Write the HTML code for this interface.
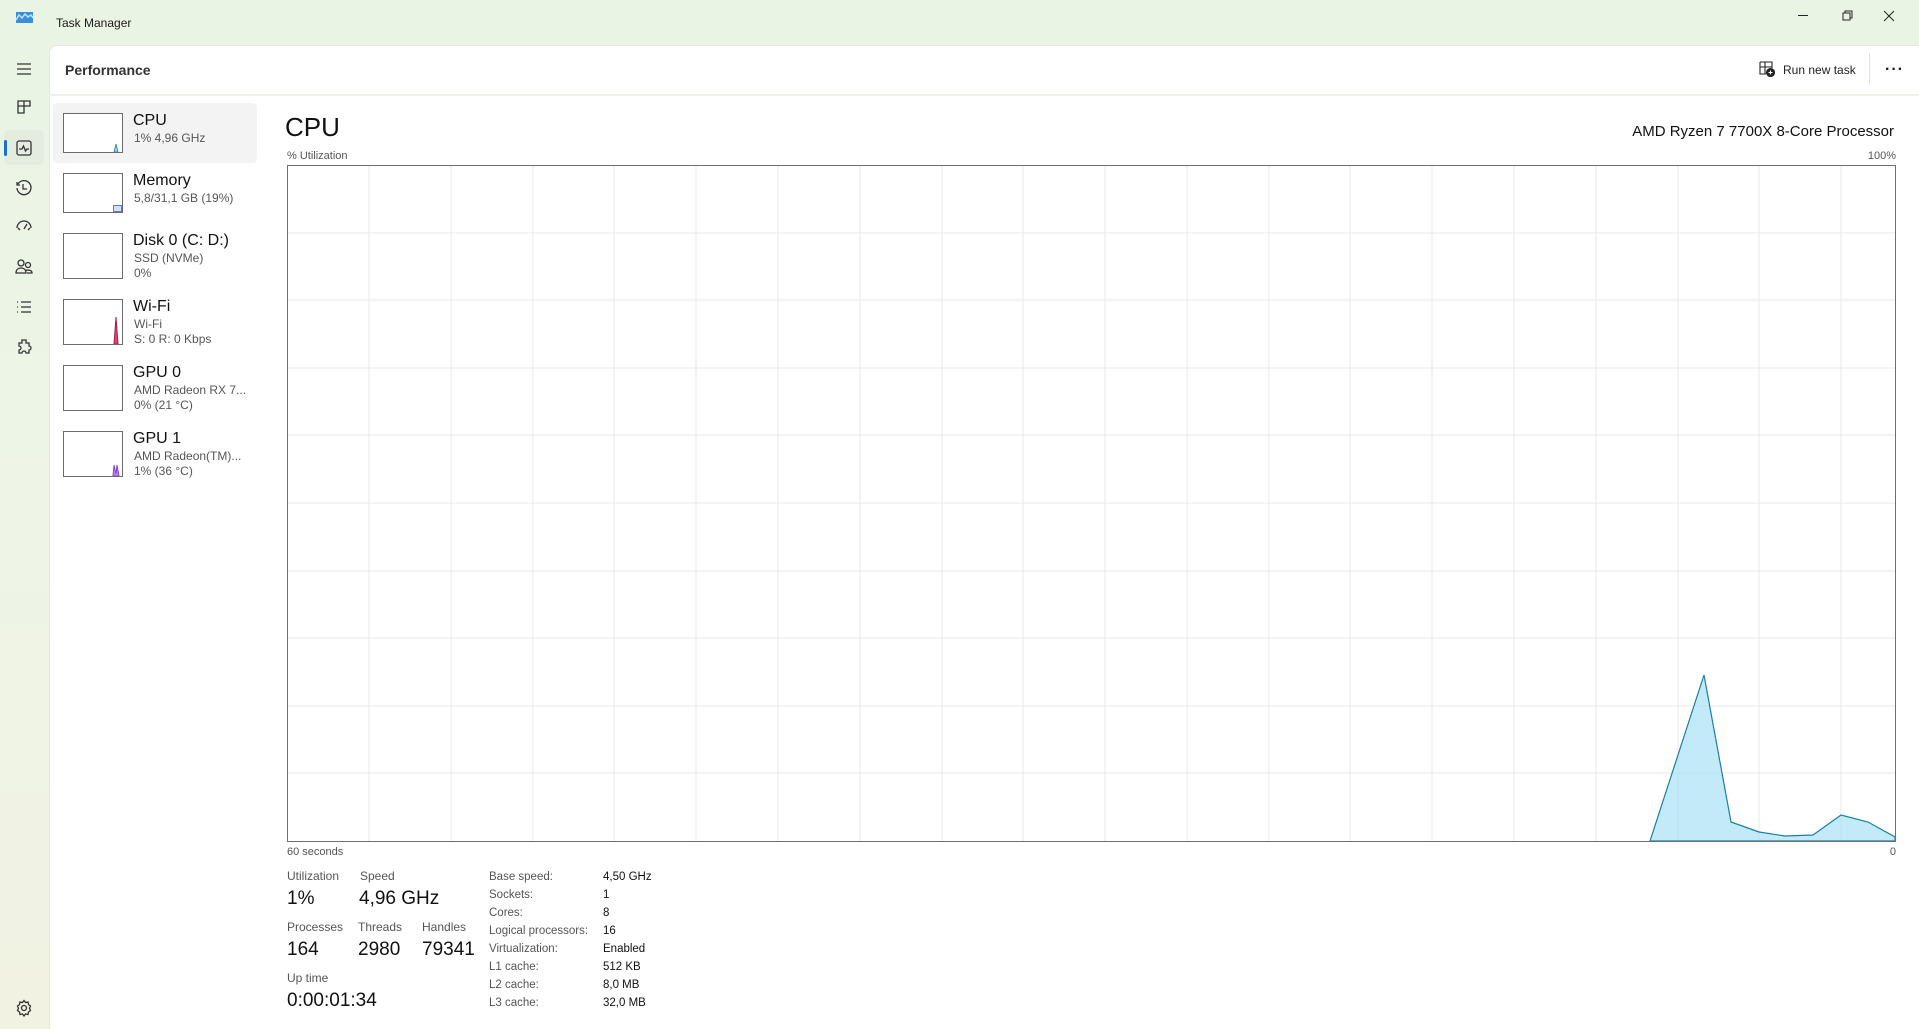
<!DOCTYPE html>
<html><head><meta charset="utf-8"><style>
*{margin:0;padding:0;box-sizing:border-box}
body{width:1919px;height:1029px;overflow:hidden;font-family:"Liberation Sans",sans-serif;color:#1a1a1a;background:linear-gradient(180deg,#e9f4e4 0%,#eef5e6 50%,#f1f2e2 100%);position:relative}
.a{position:absolute;white-space:nowrap}
#main{position:absolute;left:49px;top:45px;right:0;bottom:0;background:#fff;border-top-left-radius:8px;border-left:1px solid #e4e8e0;border-top:1px solid #e4e8e0}
.thumb{position:absolute;left:63px;width:60px;border:1px solid #6b6b6b;background:#fff}
.t1{font-size:16px;color:#111}
.t2{font-size:12px;color:#555}
.lbl{font-size:12px;color:#555}
.val{font-size:19px;color:#111}
.ic{position:absolute;left:14px;width:20px;height:20px}
</style></head><body>
<svg class="a" style="left:16px;top:12px" width="17" height="11"><rect width="17" height="11" fill="#3a8fd6"/><path d="M0 8 L3 3 L6 6 L9 2 L12 5 L15 3 L17 6" stroke="#bde3ff" fill="none" stroke-width="1.5"/></svg>
<div class="a" style="left:56px;top:16px;font-size:12px">Task Manager</div>
<svg class="a" style="left:1795px;top:8px" width="110" height="20" stroke="#222" fill="none" stroke-width="1"><path d="M3 7.5H13"/><path d="M48 5h7v7h-7z M50 5V3h7v7h-2"/><path d="M89 3L99 13M99 3L89 13"/></svg>
<div id="main"></div>
<svg class="ic" style="top:59px" viewBox="0 0 20 20" stroke="#333" fill="none" stroke-width="1.3"><path d="M3 5h14M3 10h14M3 15h14"/></svg>
<svg class="ic" style="top:97px" viewBox="0 0 20 20" stroke="#333" fill="none" stroke-width="1.3"><path d="M4 4h12v5H4zM4 9v7h6V4M10 9h6"/></svg>
<div class="a" style="left:4px;top:130px;width:40px;height:35px;background:#e4ecdf;border-radius:5px"></div>
<div class="a" style="left:4px;top:140px;width:3px;height:16px;background:#1a6fc8;border-radius:2px"></div>
<svg class="ic" style="top:138px" viewBox="0 0 20 20" stroke="#333" fill="none" stroke-width="1.3"><rect x="3" y="3" width="14" height="14" rx="2"/><path d="M5 11h3l1.5-3 2 5 1.5-2h2"/></svg>
<svg class="ic" style="top:178px" viewBox="0 0 20 20" stroke="#333" fill="none" stroke-width="1.3"><path d="M4 6A7 7 0 1 1 3 10M3 4v3h3M9 6v5h4"/></svg>
<svg class="ic" style="top:217px" viewBox="0 0 20 20" stroke="#333" fill="none" stroke-width="1.3"><path d="M3 11a7 7 0 0 1 14 0M10 12l3-5M6 13l-2-2M14 13l2-2"/></svg>
<svg class="ic" style="top:257px" viewBox="0 0 20 20" stroke="#333" fill="none" stroke-width="1.3"><circle cx="7" cy="6" r="3"/><circle cx="14" cy="8" r="2.5"/><path d="M2 16c0-4 3-5 5-5s5 1 5 5zM12 13c3 0 6 0 6 3h-5"/></svg>
<svg class="ic" style="top:297px" viewBox="0 0 20 20" stroke="#333" fill="none" stroke-width="1.3"><path d="M3 5h1M3 10h1M3 15h1M7 5h10M7 10h10M7 15h10"/></svg>
<svg class="ic" style="top:337px" viewBox="0 0 20 20" stroke="#333" fill="none" stroke-width="1.3"><path d="M8 3h4v3h3v3a2 2 0 0 1 0 4v3h-3a2 2 0 0 0-4 0H5v-3a2 2 0 0 0 0-4V6h3z"/></svg>
<svg class="ic" style="top:998px" viewBox="0 0 20 20" stroke="#333" fill="none" stroke-width="1.3"><circle cx="10" cy="10" r="2.5"/><path d="M10 2.5l1.5 2 2.5-.5.5 2.5 2 1.5-1 2.3 1 2.2-2 1.5-.5 2.5-2.5-.5-1.5 2-1.5-2-2.5.5-.5-2.5-2-1.5 1-2.2-1-2.3 2-1.5.5-2.5 2.5.5z"/></svg>
<div class="a" style="left:65px;top:62px;font-size:14px;font-weight:bold;color:#333">Performance</div>
<div class="a" style="left:49px;top:94px;right:0;height:2px;background:#eeeeea"></div>
<svg class="a" style="left:1759px;top:61px" width="16" height="16" stroke="#222" fill="none" stroke-width="1.1"><path d="M1 1h12v6M1 1v12h6M1 6h12M6 1v12"/><circle cx="11.5" cy="11.5" r="4" fill="#222"/><path d="M11.5 9.5v4M9.5 11.5h4" stroke="#fff"/></svg>
<div class="a" style="left:1783px;top:63px;font-size:12px;color:#222">Run new task</div>
<div class="a" style="left:1869px;top:53px;width:1px;height:32px;background:#e3e3e3"></div>
<div class="a" style="left:1885px;top:61px;font-size:16px;letter-spacing:1px;font-weight:bold">···</div>
<div class="a" style="left:53px;top:103px;width:204px;height:60px;background:#f3f3f3;border-radius:4px"></div>
<div class="thumb" style="top:113px;height:40px"><svg width="58" height="38" style="position:absolute;left:0;top:0"><path d="M50 38L52 30L54 38Z" fill="#9fd8ee" stroke="#1b7fa5" stroke-width=".8"/></svg></div>
<div class="a t1" style="left:133px;top:112px">CPU</div><div class="a t2" style="left:134px;top:131px">1% 4,96 GHz</div>
<div class="thumb" style="top:173px;height:40px"><div style="position:absolute;right:0;bottom:0;width:9px;height:7px;background:#cfe0f7;border:1px solid #5c7fbf"></div></div>
<div class="a t1" style="left:133px;top:172px">Memory</div><div class="a t2" style="left:134px;top:191px">5,8/31,1 GB (19%)</div>
<div class="thumb" style="top:233px;height:46px"></div>
<div class="a t1" style="left:133px;top:232px">Disk 0 (C: D:)</div><div class="a t2" style="left:134px;top:251px">SSD (NVMe)</div><div class="a t2" style="left:134px;top:266px">0%</div>
<div class="thumb" style="top:299px;height:46px"><svg width="58" height="44" style="position:absolute"><path d="M50 44L52 17L54 44Z" fill="#d9477a" stroke="#b01848"/></svg></div>
<div class="a t1" style="left:133px;top:298px">Wi-Fi</div><div class="a t2" style="left:134px;top:317px">Wi-Fi</div><div class="a t2" style="left:134px;top:332px">S: 0 R: 0 Kbps</div>
<div class="thumb" style="top:365px;height:46px"></div>
<div class="a t1" style="left:133px;top:364px">GPU 0</div><div class="a t2" style="left:134px;top:383px">AMD Radeon RX 7...</div><div class="a t2" style="left:134px;top:398px">0% (21 °C)</div>
<div class="thumb" style="top:431px;height:46px"><svg width="58" height="44" style="position:absolute"><path d="M49 44L50 33L52 42L53 33L55 44Z" fill="#b98be8" stroke="#8a3fd9"/></svg></div>
<div class="a t1" style="left:133px;top:430px">GPU 1</div><div class="a t2" style="left:134px;top:449px">AMD Radeon(TM)...</div><div class="a t2" style="left:134px;top:464px">1% (36 °C)</div>
<div class="a" style="left:285px;top:112px;font-size:26px;color:#111">CPU</div>
<div class="a" style="left:1300px;width:594px;text-align:right;top:123px;font-size:15px;color:#111">AMD Ryzen 7 7700X 8-Core Processor</div>
<div class="a" style="left:287px;top:150px;font-size:11px;color:#555">% Utilization</div>
<div class="a" style="left:1800px;width:96px;text-align:right;top:150px;font-size:11px;color:#555">100%</div>
<svg class="a" style="left:287px;top:165px" width="1610" height="677">
<g stroke="#e8e8e8" stroke-width="1">
<path d="M82 0V676M164 0V676M246 0V676M327 0V676M409 0V676M491 0V676M573 0V676M655 0V676M736 0V676M818 0V676M900 0V676M982 0V676M1063 0V676M1145 0V676M1227 0V676M1309 0V676M1391 0V676M1472 0V676M1554 0V676"/>
<path d="M0 68H1608M0 135H1608M0 203H1608M0 270H1608M0 338H1608M0 406H1608M0 473H1608M0 541H1608M0 608H1608"/>
</g>
<path d="M1363 676L1417 510L1444 657L1472 667L1498 671L1526 670L1554 650L1581 657L1608 672V676Z" fill="#a9e1f5" fill-opacity=".7" stroke="#1b7fa5" stroke-width="1.2"/>
<rect x=".5" y=".5" width="1608" height="676" fill="none" stroke="#6e6e6e"/>
</svg>
<div class="a" style="left:287px;top:846px;font-size:11px;color:#555">60 seconds</div>
<div class="a" style="left:1880px;width:16px;text-align:right;top:846px;font-size:11px;color:#555">0</div>
<div class="a lbl" style="left:287px;top:869px">Utilization</div><div class="a lbl" style="left:360px;top:869px">Speed</div>
<div class="a val" style="left:287px;top:888px">1%</div><div class="a val" style="left:359px;top:888px">4,96 GHz</div>
<div class="a lbl" style="left:287px;top:920px">Processes</div><div class="a lbl" style="left:358px;top:920px">Threads</div><div class="a lbl" style="left:422px;top:920px">Handles</div>
<div class="a val" style="left:287px;top:939px">164</div><div class="a val" style="left:358px;top:939px">2980</div><div class="a val" style="left:422px;top:939px">79341</div>
<div class="a lbl" style="left:287px;top:971px">Up time</div>
<div class="a val" style="left:287px;top:990px">0:00:01:34</div>
<div class="a lbl" style="left:489px;top:868px;line-height:18px;font-size:11.5px">Base speed:<br>Sockets:<br>Cores:<br>Logical processors:<br>Virtualization:<br>L1 cache:<br>L2 cache:<br>L3 cache:</div>
<div class="a" style="left:603px;top:868px;font-size:11.5px;line-height:18px;color:#111">4,50 GHz<br>1<br>8<br>16<br>Enabled<br>512 KB<br>8,0 MB<br>32,0 MB</div>
</body></html>
